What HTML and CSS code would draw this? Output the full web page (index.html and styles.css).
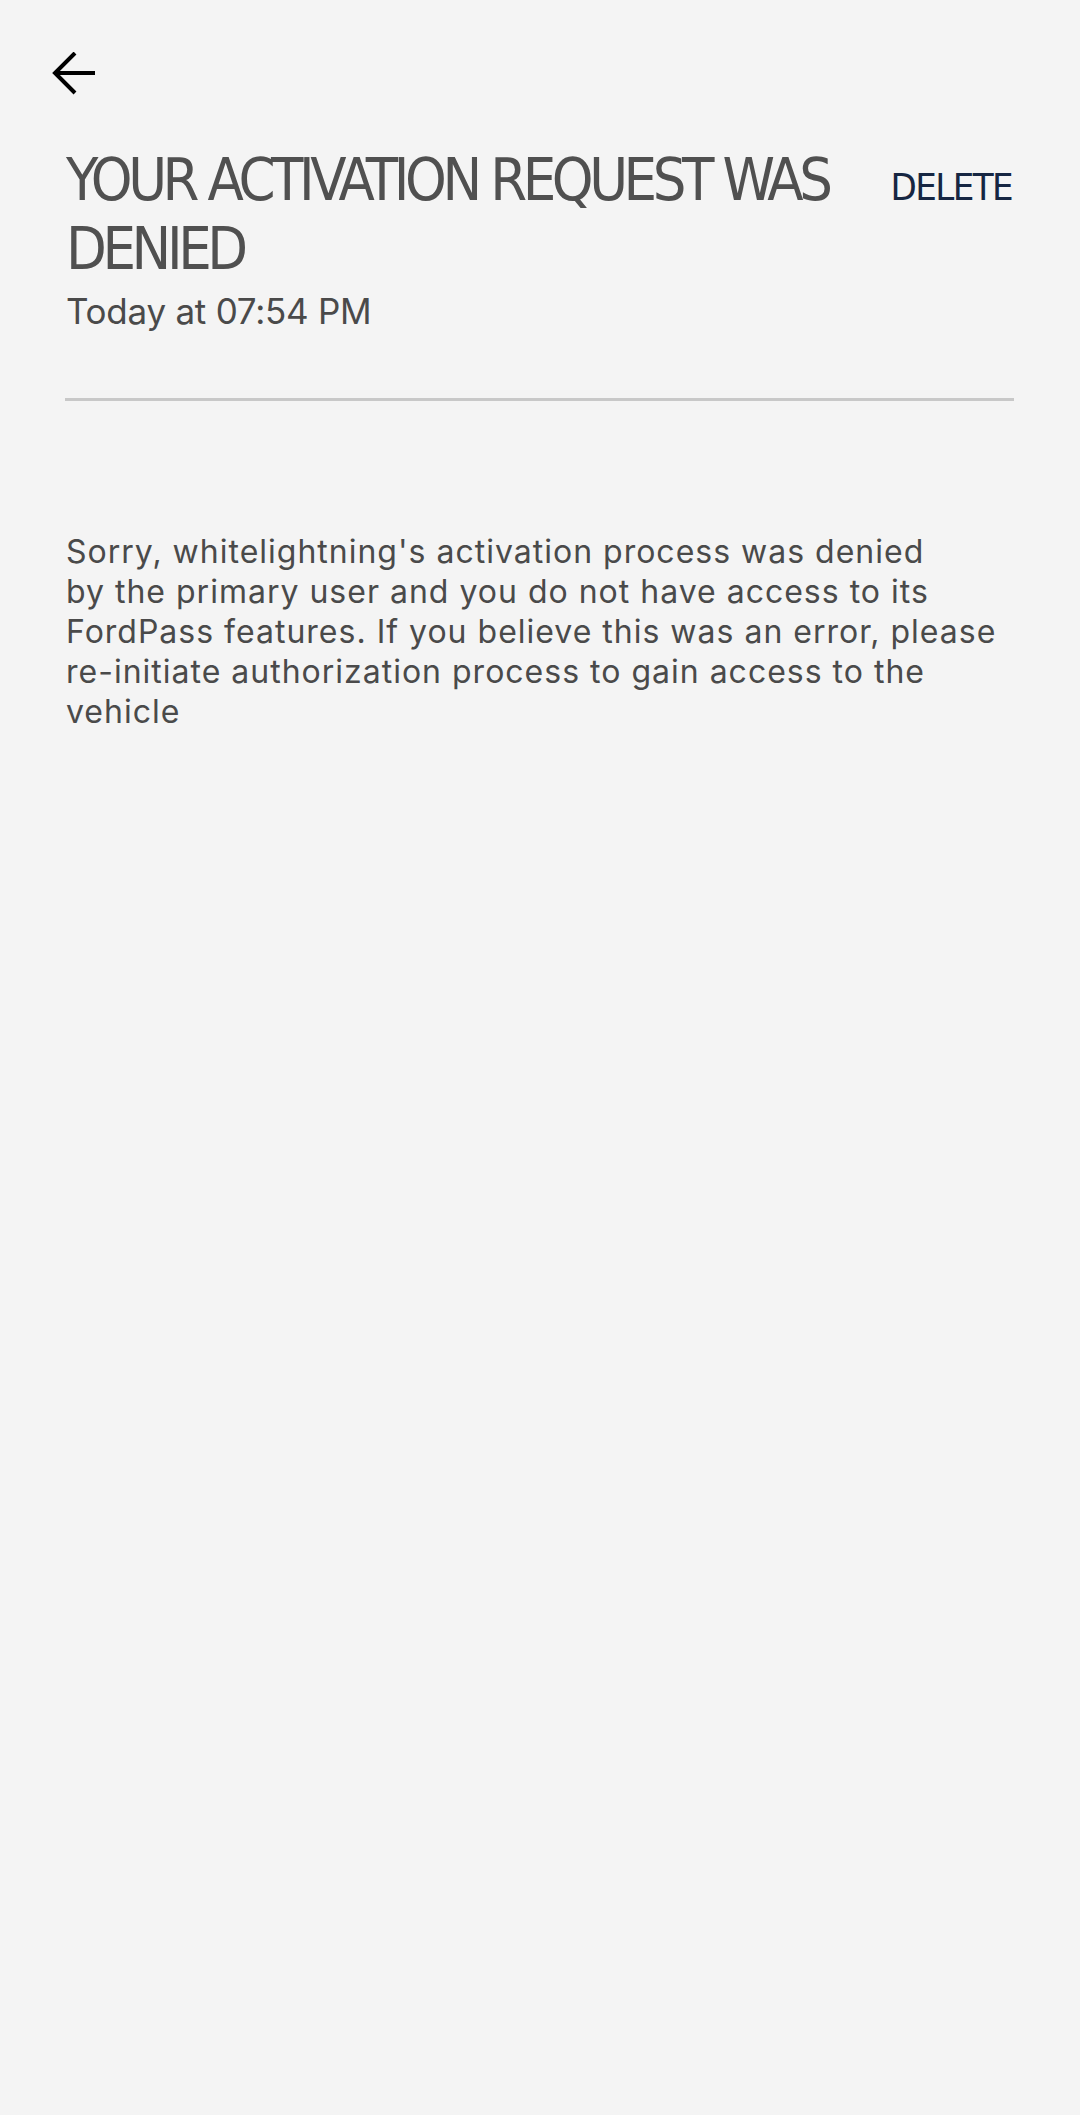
FILE: index.html
```html
<!DOCTYPE html>
<html lang="en">
<head>
<meta charset="utf-8">
<title>Notification</title>
<link rel="stylesheet" href="styles.css">
</head>
<body>
<div class="screen">
  <header class="topbar">
    <button class="back" aria-label="Back">
      <svg width="44" height="44" viewBox="0 0 44 44" aria-hidden="true">
        <path d="M43 21H3" fill="none" stroke="#000" stroke-width="4"/>
        <path d="M23 1L3 21L23 41" fill="none" stroke="#000" stroke-width="4"/>
      </svg>
    </button>
  </header>
  <section class="head">
    <h1 class="title">YOUR ACTIVATION REQUEST WAS DENIED</h1>
    <span class="delete">DELETE</span>
  </section>
  <p class="time">Today at 07:54 PM</p>
  <hr class="divider">
  <p class="message">Sorry, whitelightning's activation process was denied<br>by the primary user and you do not have access to its<br>FordPass features. If you believe this was an error, please<br>re-initiate authorization process to gain access to the<br>vehicle</p>
</div>
</body>
</html>
```
FILE: styles.css
```css
html, body {
  margin: 0;
  padding: 0;
  background: #f4f4f4;
}
.screen {
  width: 1080px;
  min-height: 2115px;
  background: #f4f4f4;
  color: #4a4a4a;
  font-family: Inter, "Open Sans", "Liberation Sans", sans-serif;
}
.topbar {
  padding: 52px 0 0 52px;
  height: 44px;
}
.back {
  display: block;
  padding: 0;
  margin: 0;
  border: 0;
  background: none;
  width: 44px;
  height: 44px;
}
.back svg {
  display: block;
}
.head {
  display: flex;
  align-items: baseline;
  gap: 20px;
  padding: 49px 68px 0 66px;
}
.title {
  flex: 1;
  margin: 0;
  font-family: "DejaVu Sans Condensed", "Liberation Sans Narrow", "Liberation Sans", sans-serif;
  font-stretch: condensed;
  font-weight: 400;
  font-size: 59px;
  line-height: 69px;
  letter-spacing: -4.4px;
  color: #505050;
}
.delete {
  font-family: "DejaVu Sans Condensed", "Liberation Sans Narrow", "Liberation Sans", sans-serif;
  font-stretch: condensed;
  font-size: 38px;
  letter-spacing: -1.6px;
  color: #162642;
}
.time {
  margin: 6px 0 0 66px;
  font-size: 35px;
  line-height: 44px;
  letter-spacing: -0.25px;
  color: #4a4a4a;
}
.divider {
  margin: 65px 66px 0 65px;
  border: 0;
  height: 3px;
  background: #c8c8c8;
}
.message {
  margin: 131px 0 0 66px;
  font-size: 32px;
  line-height: 40px;
  letter-spacing: 1px;
  color: #4a4a4a;
}
```
